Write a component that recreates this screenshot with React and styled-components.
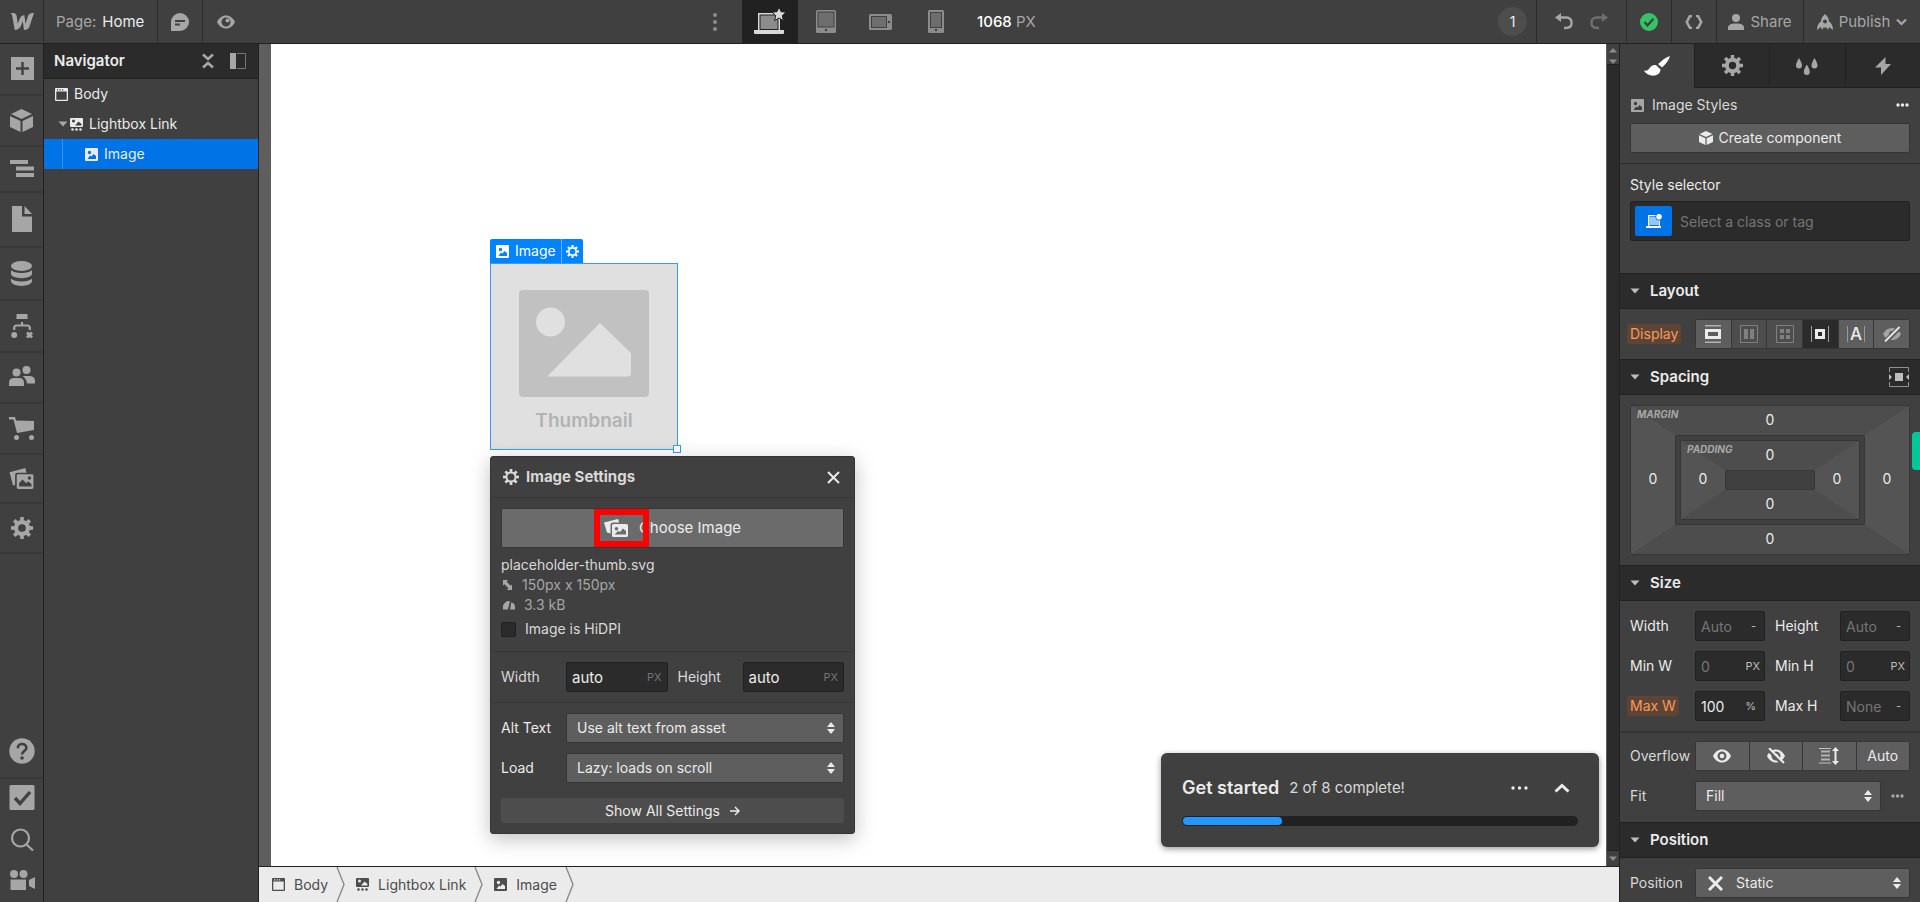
import React, { useState } from "react";
import styled, { createGlobalStyle, css } from "styled-components";

const App = () => {
  return (
    <>
      <GlobalStyle />
      <StApp>
        <TopBar />
        <StMain>
          <SideBar />
          <Navigator />
          <StCenter>
            <Canvas />
            <BottomBar />
          </StCenter>
          <StylePanel />
        </StMain>
        <StFeedbackTab aria-label="Feedback" />
      </StApp>
    </>
  );
};

export default App;

/* ---------- top bar ---------- */

const TopBar = () => {
  return (
    <StTopBar>
      <StTopLeft>
        <StTopButton aria-label="Menu" $width={44} $line>
          <LogoIcon />
        </StTopButton>
        <StPageButton>
          Page: <StPageName>Home</StPageName>
        </StPageButton>
        <StTopButton aria-label="Comments" $width={45} $line>
          <CommentIcon />
        </StTopButton>
        <StTopButton aria-label="Preview" $width={45}>
          <EyeIcon width={18} />
        </StTopButton>
      </StTopLeft>
      <StTopCenter>
        <StTopButton aria-label="More breakpoints" $width={26} $dim>
          <VerticalDotsIcon />
        </StTopButton>
        <StBreakpoints>
          <StTopButton aria-label="Desktop" $width={56} $active>
            <DesktopIcon />
          </StTopButton>
          <StTopButton aria-label="Tablet" $width={55} $dim>
            <TabletIcon />
          </StTopButton>
          <StTopButton aria-label="Mobile landscape" $width={55} $dim>
            <LandscapeIcon />
          </StTopButton>
          <StTopButton aria-label="Mobile portrait" $width={55} $dim>
            <PhoneIcon />
          </StTopButton>
        </StBreakpoints>
        <StCanvasWidth>
          <b>1068</b> PX
        </StCanvasWidth>
      </StTopCenter>
      <StTopRight>
        <StCount>1</StCount>
        <StHistory>
          <StIconButton aria-label="Undo">
            <UndoIcon />
          </StIconButton>
          <StRedo aria-label="Redo">
            <UndoIcon />
          </StRedo>
        </StHistory>
        <StTopButton aria-label="Saved" $width={45} $line>
          <SavedIcon />
        </StTopButton>
        <StTopButton aria-label="Export code" $width={45} $line>
          <CodeIcon />
        </StTopButton>
        <StTopButton $width={87} $line>
          <PersonIcon />
          Share
        </StTopButton>
        <StTopButton $width={116}>
          <RocketIcon />
          Publish
          <ChevronIcon />
        </StTopButton>
      </StTopRight>
    </StTopBar>
  );
};

/* ---------- left tools ---------- */

const SideBar = () => {
  return (
    <StSideBar>
      <StSideButton aria-label="Add element">
        <PlusIcon />
      </StSideButton>
      <StSideButton aria-label="Components">
        <CubeIcon size={23} />
      </StSideButton>
      <StSideButton aria-label="Navigator">
        <LayersIcon />
      </StSideButton>
      <StSideButton aria-label="Pages">
        <PageIcon />
      </StSideButton>
      <StSideButton aria-label="CMS">
        <DatabaseIcon />
      </StSideButton>
      <StSideButton aria-label="Logic">
        <LogicIcon />
      </StSideButton>
      <StSideButton aria-label="Users">
        <UsersIcon />
      </StSideButton>
      <StSideButton aria-label="Ecommerce">
        <CartIcon />
      </StSideButton>
      <StSideButton aria-label="Assets">
        <AssetsIcon />
      </StSideButton>
      <StSideButton aria-label="Settings">
        <GearIcon size={24} height={22} />
      </StSideButton>
      <StSpacer />
      <StSideButton aria-label="Help">
        <HelpIcon />
      </StSideButton>
      <StSmallSideButton aria-label="Audit">
        <AuditIcon />
      </StSmallSideButton>
      <StSmallSideButton aria-label="Search">
        <SearchIcon />
      </StSmallSideButton>
      <StSmallSideButton aria-label="Video tutorials">
        <CameraIcon />
      </StSmallSideButton>
    </StSideBar>
  );
};

/* ---------- navigator ---------- */

const Navigator = () => {
  return (
    <StNavigator>
      <StNavHeader>
        <StNavTitle>Navigator</StNavTitle>
        <StIconButton aria-label="Collapse all">
          <CollapseIcon />
        </StIconButton>
        <StIconButton aria-label="Dock panel">
          <DockIcon />
        </StIconButton>
      </StNavHeader>
      <StNavRow $indent={11}>
        <BodyIcon />
        Body
      </StNavRow>
      <StNavRow $indent={14}>
        <CaretIcon />
        <LightboxIcon />
        Lightbox Link
      </StNavRow>
      <StNavRow $indent={18} $selected>
        <StTreeLine />
        <ImageIcon />
        Image
      </StNavRow>
    </StNavigator>
  );
};

/* ---------- canvas ---------- */

const Canvas = () => {
  return (
    <StCanvas>
      <StGutter />
      <StPage>
        <StSelection>
          <StSelectionLabel>
            <StLabelName>
              <ImageIcon />
              Image
            </StLabelName>
            <StLabelSettings aria-label="Element settings">
              <GearIcon size={13} thin />
            </StLabelSettings>
          </StSelectionLabel>
          <StThumb>
            <PlaceholderDrawing />
            <StThumbText>Thumbnail</StThumbText>
            <StHandle />
          </StThumb>
          <ImageSettings />
        </StSelection>
        <GetStarted />
      </StPage>
      <StScroll>
        <StScrollTop>
          <ArrowUp />
          <ArrowDown />
        </StScrollTop>
        <StScrollBottom>
          <ArrowDown />
        </StScrollBottom>
      </StScroll>
    </StCanvas>
  );
};

const ImageSettings = () => {
  const [hidpi, setHidpi] = useState(false);
  const [width, setWidth] = useState("auto");
  const [height, setHeight] = useState("auto");

  return (
    <StPopover>
      <StPopHeader>
        <GearIcon size={16} thin />
        <StPopTitle>Image Settings</StPopTitle>
        <StIconButton aria-label="Close" $bright>
          <CloseIcon size={13} />
        </StIconButton>
      </StPopHeader>
      <StPopSection>
        <StChooseButton>
          <PicturesIcon />
          Choose Image
          <StMarker />
        </StChooseButton>
        <StFileName>placeholder-thumb.svg</StFileName>
        <StFileMeta>
          <ResizeIcon />
          150px x 150px
        </StFileMeta>
        <StFileMeta>
          <GaugeIcon />
          3.3 kB
        </StFileMeta>
        <StCheckLabel>
          <StCheckbox
            type="checkbox"
            checked={hidpi}
            onChange={() => setHidpi(!hidpi)}
          />
          Image is HiDPI
        </StCheckLabel>
      </StPopSection>
      <StPopSizes>
        <label htmlFor="img-width">Width</label>
        <StField>
          <StInput
            id="img-width"
            value={width}
            onChange={(e) => setWidth(e.target.value)}
            $large
          />
          <StUnit $dim>PX</StUnit>
        </StField>
        <label htmlFor="img-height">Height</label>
        <StField>
          <StInput
            id="img-height"
            value={height}
            onChange={(e) => setHeight(e.target.value)}
            $large
          />
          <StUnit $dim>PX</StUnit>
        </StField>
      </StPopSizes>
      <StPopSelects>
        <label htmlFor="alt-text">Alt Text</label>
        <Select id="alt-text" options={["Use alt text from asset"]} />
        <label htmlFor="load">Load</label>
        <Select id="load" options={["Lazy: loads on scroll"]} />
      </StPopSelects>
      <StShowAll>
        Show All Settings <ArrowRightIcon />
      </StShowAll>
    </StPopover>
  );
};

const GetStarted = () => {
  return (
    <StStarted>
      <StStartedRow>
        <StStartedTitle>Get started</StStartedTitle>
        <StStartedText>2 of 8 complete!</StStartedText>
        <StIconButton aria-label="More" $bright>
          <DotsIcon width={17} />
        </StIconButton>
        <StIconButton aria-label="Expand" $bright>
          <ChevronUpIcon />
        </StIconButton>
      </StStartedRow>
      <StProgress>
        <StProgressBar $done={2} $total={8} />
      </StProgress>
    </StStarted>
  );
};

const Select = ({ id, options, icon }) => {
  return (
    <StSelectBox>
      {icon && <StSelectIcon>{icon}</StSelectIcon>}
      <StSelect id={id} $hasIcon={!!icon}>
        {options.map((option) => (
          <option key={option}>{option}</option>
        ))}
      </StSelect>
      <StSelectArrows>
        <UpDownIcon />
      </StSelectArrows>
    </StSelectBox>
  );
};

const BottomBar = () => {
  return (
    <StBottomBar>
      <StCrumb href="#body">
        <BodyIcon />
        Body
      </StCrumb>
      <CrumbLine />
      <StCrumb href="#lightbox-link">
        <LightboxIcon />
        Lightbox Link
      </StCrumb>
      <CrumbLine />
      <StCrumb href="#image">
        <ImageIcon />
        Image
      </StCrumb>
      <CrumbLine />
    </StBottomBar>
  );
};

/* ---------- style panel ---------- */

const sizeFields = [
  { id: "width", label: "Width", placeholder: "Auto", unit: "-" },
  { id: "height", label: "Height", placeholder: "Auto", unit: "-" },
  { id: "min-w", label: "Min W", placeholder: "0", unit: "PX" },
  { id: "min-h", label: "Min H", placeholder: "0", unit: "PX" },
  { id: "max-w", label: "Max W", value: "100", unit: "%" },
  { id: "max-h", label: "Max H", placeholder: "None", unit: "-" },
];

const StylePanel = () => {
  return (
    <StPanel>
      <StTabs>
        <StTab aria-label="Style" $active>
          <BrushIcon />
        </StTab>
        <StTab aria-label="Settings">
          <GearIcon size={21} />
        </StTab>
        <StTab aria-label="Style manager">
          <DropsIcon />
        </StTab>
        <StTab aria-label="Interactions">
          <BoltIcon />
        </StTab>
      </StTabs>
      <StStylesTop>
        <StStylesRow>
          <ImageIcon />
          <StStylesName>Image Styles</StStylesName>
          <StIconButton aria-label="More" $bright>
            <DotsIcon width={13} />
          </StIconButton>
        </StStylesRow>
        <StCreateButton>
          <CubeIcon size={14} />
          Create component
        </StCreateButton>
      </StStylesTop>
      <StSelectorSection>
        <label htmlFor="selector">Style selector</label>
        <StSelectorField>
          <StSelectorChip aria-label="Inheritance">
            <SelectorIcon />
          </StSelectorChip>
          <StInput id="selector" placeholder="Select a class or tag" $plain />
        </StSelectorField>
      </StSelectorSection>

      <Section title="Layout">
        <StRow>
          <StTag>Display</StTag>
          <StGroup>
            <StGroupButton aria-label="Block">
              <BlockIcon />
            </StGroupButton>
            <StGroupButton aria-label="Flex" $muted>
              <FlexIcon />
            </StGroupButton>
            <StGroupButton aria-label="Grid" $muted>
              <GridIcon />
            </StGroupButton>
            <StGroupButton aria-label="Inline block" $active>
              <InlineBlockIcon />
            </StGroupButton>
            <StGroupButton aria-label="Inline">
              <StInlineMark>A</StInlineMark>
            </StGroupButton>
            <StGroupButton aria-label="None">
              <NoneIcon />
            </StGroupButton>
          </StGroup>
        </StRow>
      </Section>

      <Section title="Spacing" action={<AutoMarginIcon />}>
        <SpacingBox name="MARGIN">
          <StBoxWell>
            <SpacingBox name="PADDING">
              <StBoxCore />
            </SpacingBox>
          </StBoxWell>
        </SpacingBox>
      </Section>

      <Section title="Size">
        <StSizeGrid>
          {sizeFields.map((field) => (
            <SizeField key={field.id} {...field} />
          ))}
        </StSizeGrid>
      </Section>
      <StSectionBody $divided>
        <StRow>
          <span>Overflow</span>
          <StGroup>
            <StGroupButton aria-label="Visible">
              <EyeIcon width={18} dot />
            </StGroupButton>
            <StGroupButton aria-label="Hidden">
              <EyeOffIcon />
            </StGroupButton>
            <StGroupButton aria-label="Scroll">
              <ScrollIcon />
            </StGroupButton>
            <StGroupButton>Auto</StGroupButton>
          </StGroup>
        </StRow>
        <StRow>
          <label htmlFor="fit">Fit</label>
          <StInlineFields>
            <Select id="fit" options={["Fill", "Contain", "Cover", "None"]} />
            <StIconButton aria-label="Fit options">
              <DotsIcon width={13} />
            </StIconButton>
          </StInlineFields>
        </StRow>
      </StSectionBody>

      <Section title="Position">
        <StRow>
          <label htmlFor="position">Position</label>
          <Select
            id="position"
            icon={<CloseIcon size={15} bold />}
            options={["Static", "Relative", "Absolute", "Fixed", "Sticky"]}
          />
        </StRow>
      </Section>
    </StPanel>
  );
};

const Section = ({ title, action, children }) => {
  return (
    <>
      <StSectionHeader>
        <CaretIcon />
        <StSectionTitle>{title}</StSectionTitle>
        {action}
      </StSectionHeader>
      <StSectionBody>{children}</StSectionBody>
    </>
  );
};

const SizeField = ({ id, label, value, placeholder, unit }) => {
  return (
    <>
      {value ? (
        <StTag as="label" htmlFor={id}>
          {label}
        </StTag>
      ) : (
        <label htmlFor={id}>{label}</label>
      )}
      <StField>
        <StInput id={id} defaultValue={value} placeholder={placeholder} />
        <StUnit $right={unit === "PX" ? 5 : 9}>{unit}</StUnit>
      </StField>
    </>
  );
};

const SpacingBox = ({ name, children }) => {
  return (
    <StBox>
      <StBoxName>{name}</StBoxName>
      <StBoxValue $area="top">0</StBoxValue>
      <StBoxValue $area="left">0</StBoxValue>
      <StBoxInner>{children}</StBoxInner>
      <StBoxValue $area="right">0</StBoxValue>
      <StBoxValue $area="bottom">0</StBoxValue>
    </StBox>
  );
};

/* ---------- icons ---------- */

const Svg = ({ w, h, children, ...rest }) => (
  <svg
    width={w}
    height={h}
    viewBox={`0 0 ${w} ${h}`}
    fill="currentColor"
    aria-hidden="true"
    {...rest}
  >
    {children}
  </svg>
);

const LogoIcon = () => (
  <Svg w={24} h={17}>
    <path d="M24 0s-4.2 12.400-4.500 13.500C19.100 15.600 16.600 17 14 17c0 0-1.100-7.900-1.200-8.700C12.500 9.200 10.900 13 10.900 13 9.700 15.800 7.200 17 4.700 17L2.300 3.300C2 1.200 1 .2 0 0h3.400C5 0 6.400 1 6.700 3l1 7.900c.1-.6 2.600-6.300 2.600-6.300.6-1.400 1.800-2.400 4.100-2.400l1.100 8.700 2.400-7.700C18.600 1 20.600 0 22.500 0z" />
  </Svg>
);

const CommentIcon = () => (
  <Svg w={18} h={18}>
    <path
      fillRule="evenodd"
      d="M9 0a9 9 0 1 1 0 18H0V9a9 9 0 0 1 9-9zM4 7v2h10V7zm0 3.500v2h5v-2z"
    />
  </Svg>
);

const EyeIcon = ({ width, dot }) => (
  <svg
    width={width}
    height={14}
    viewBox="0 0 18 14"
    fill="currentColor"
    aria-hidden="true"
  >
    <path
      fillRule="evenodd"
      d="M9 .5c4 0 7 2.500 9 6.500-2 4-5 6.500-9 6.500S2 11 0 7C2 3 5 .5 9 .5zm0 2a4.500 4.500 0 1 0 0 9 4.500 4.500 0 0 0 0-9z"
    />
    {dot ? (
      <circle cx="9" cy="7" r="2.300" />
    ) : (
      <circle cx="10.500" cy="5.500" r="2" />
    )}
  </svg>
);

const EyeOffIcon = () => (
  <Svg w={18} h={16}>
    <path
      fillRule="evenodd"
      d="M9 1.500c4 0 7 2.500 9 6.500-2 4-5 6.500-9 6.500S2 12 0 8c2-4 5-6.500 9-6.500zm0 2a4.500 4.500 0 1 0 0 9 4.500 4.500 0 0 0 0-9z"
    />
    <circle cx="9" cy="8" r="2.300" />
    <path d="M1 2 15 16" stroke="#5e5e5e" strokeWidth="2.500" />
    <path d="M2 0l15 15" stroke="currentColor" strokeWidth="2" />
  </Svg>
);

const VerticalDotsIcon = () => (
  <Svg w={4} h={20}>
    <circle cx="2" cy="3" r="2" />
    <circle cx="2" cy="10" r="2" />
    <circle cx="2" cy="17" r="2" />
  </Svg>
);

const DotsIcon = ({ width }) => (
  <svg
    width={width}
    height="4"
    viewBox={`0 0 ${width} 4`}
    fill="currentColor"
    aria-hidden="true"
  >
    <circle cx="2" cy="2" r="1.700" />
    <circle cx={width / 2} cy="2" r="1.700" />
    <circle cx={width - 2} cy="2" r="1.700" />
  </svg>
);

const DesktopIcon = () => (
  <Svg w={32} h={30}>
    <path d="M4 6h22v17H4z" fill="#d9d9d9" />
    <path d="M5.500 7.500h19V23h-19z" fill="#212121" />
    <path d="M6.500 8.500h17V22h-17z" fill="#8c8c8c" />
    <path d="M0 23h30v3q0 1-1 1H1q-1 0-1-1z" fill="#d9d9d9" />
    <path
      d="M25 0l2.100 4.700 5 .5-3.800 3.400 1.100 5L25 11l-4.400 2.600 1.100-5L18 5.200l5-.5z"
      fill="#d9d9d9"
      stroke="#212121"
      strokeWidth="1"
    />
  </Svg>
);

const TabletIcon = () => (
  <Svg w={20} h={23}>
    <rect width="20" height="23" rx="1.500" />
    <path d="M1.500 1.500h17v16h-17z" fill="#404040" />
    <path d="M2.500 2.500h15v14h-15z" fill="#6e6e6e" />
    <circle cx="10" cy="20" r="1.200" fill="#404040" />
  </Svg>
);

const LandscapeIcon = () => (
  <Svg w={23} h={16}>
    <rect width="23" height="16" rx="1.500" />
    <path d="M2 2h16v12H2z" fill="#404040" />
    <path d="M3 3h14v10H3z" fill="#6e6e6e" />
    <circle cx="20" cy="8" r="1.200" fill="#404040" />
  </Svg>
);

const PhoneIcon = () => (
  <Svg w={16} h={23}>
    <rect width="16" height="23" rx="1.500" />
    <path d="M2 2h12v16H2z" fill="#404040" />
    <path d="M3 3h10v14H3z" fill="#6e6e6e" />
    <circle cx="8" cy="20" r="1.200" fill="#404040" />
  </Svg>
);

const UndoIcon = () => (
  <Svg w={18} h={17}>
    <path d="M6 0v9L0 4.500z" />
    <path
      d="M4 4.500h7a5 5 0 0 1 5.500 5.500c0 3-2 5-5.500 5H9"
      fill="none"
      stroke="currentColor"
      strokeWidth="2.400"
    />
  </Svg>
);

const SavedIcon = () => (
  <Svg w={18} h={18}>
    <circle cx="9" cy="9" r="9" fill="#33c466" />
    <path
      d="M4.500 9l3 3.300 6-6.600"
      fill="none"
      stroke="#404040"
      strokeWidth="2.200"
    />
  </Svg>
);

const CodeIcon = () => (
  <Svg w={18} h={14} fill="none" stroke="currentColor" strokeWidth="2.600">
    <path d="M7 1 5 1 1.800 7 5 13h2M11 1h2l3.200 6L13 13h-2" />
  </Svg>
);

const PersonIcon = () => (
  <Svg w={16} h={16}>
    <circle cx="8" cy="4" r="4" />
    <path d="M0 16v-2.500C0 11 3 9.500 8 9.500s8 1.500 8 4V16z" />
  </Svg>
);

const RocketIcon = () => (
  <Svg w={16} h={16}>
    <path
      fillRule="evenodd"
      d="M8 0c3 2.500 4 5 4 7.500 2.500 1.500 4 4 4 8.500l-4-3-1 3-1.500-2.500h-3L5 16l-1-3-4 3c0-4.500 1.500-7 4-8.500C4 5 5 2.500 8 0zm0 5.500a2 2 0 1 0 0 4 2 2 0 0 0 0-4z"
    />
  </Svg>
);

const ChevronIcon = () => (
  <Svg w={11} h={8} fill="none" stroke="currentColor" strokeWidth="2.200">
    <path d="M1 1.500l4.500 4.500L10 1.500" />
  </Svg>
);

const ChevronUpIcon = () => (
  <Svg w={16} h={10} fill="none" stroke="currentColor" strokeWidth="3">
    <path d="M1.500 8.500 8 2.500l6.500 6" />
  </Svg>
);

const PlusIcon = () => (
  <Svg w={24} h={24}>
    <path
      fillRule="evenodd"
      d="M1 0h23v23H1zM11.300 5v5.300H6v2.400h5.300V18h2.400v-5.300H19v-2.400h-5.300V5z"
    />
  </Svg>
);

const CubeIcon = ({ size }) => (
  <svg
    width={size}
    height={size}
    viewBox="0 0 23 23"
    fill="currentColor"
    aria-hidden="true"
  >
    <path d="M11.500 0 22 5l-10.500 5L1 5zM0 7l10.500 5v11L0 18zM23 7l-10.500 5v11L23 18z" />
  </svg>
);

const LayersIcon = () => (
  <Svg w={24} h={18}>
    <path d="M0 0h18v4H0zM6 6.500h18v4H6zM6 13h18v4H6z" />
  </Svg>
);

const PageIcon = () => (
  <Svg w={20} h={27}>
    <path d="M0 0h10v10.500h10V26H0zM12.500 0 20 8h-7.500z" />
  </Svg>
);

const DatabaseIcon = () => (
  <Svg w={21} h={25}>
    <ellipse cx="10.500" cy="5" rx="10.500" ry="5" />
    <path d="M0 9c3 4 18 4 21 0v4c-1 5.500-20 5.500-21 0zM0 17.500c3 4 18 4 21 0V20c-1 6.500-20 6.500-21 0z" />
  </Svg>
);

const LogicIcon = () => (
  <Svg w={22} h={24}>
    <path d="M5.500 0h11v5h-11z" />
    <path
      d="M11 8v3M3.200 16v-2q0-2.500 2.500-2.500h10.600q2.500 0 2.500 2.500v2"
      fill="none"
      stroke="currentColor"
      strokeWidth="2.200"
    />
    <circle cx="3.200" cy="21" r="3" />
    <path
      d="M16 18.500l5 5M21 18.500l-5 5"
      stroke="currentColor"
      strokeWidth="3"
    />
  </Svg>
);

const UsersIcon = () => (
  <Svg w={26} h={23}>
    <circle cx="7.500" cy="6.500" r="4" />
    <circle cx="17.500" cy="4" r="4" />
    <path d="M0 20v-3q0-5 5-5h5q5 0 5 5v3zM13.500 10h6.500q6 0 6 5v2.500h-8q-.5-5-4.500-7.500z" />
  </Svg>
);

const CartIcon = () => (
  <Svg w={26} h={23}>
    <path d="M0 0h6l1 3.500 18 .5v9L8 16 4.500 2.500H0z" />
    <circle cx="7.500" cy="20.500" r="2.500" />
    <circle cx="22.500" cy="20.500" r="2.500" />
  </Svg>
);

const AssetsIcon = () => (
  <svg
    width="25"
    height="21"
    viewBox="0 0 25 22"
    fill="currentColor"
    aria-hidden="true"
  >
    <path d="M0 4.500 16.500 0l1.200 5H8q-2.200 0-2.200 2.200V18L3.500 18z" />
    <path
      fillRule="evenodd"
      d="M9 6.500h14.500q1.500 0 1.500 1.500v12.500q0 1.500-1.500 1.500H9q-1.500 0-1.500-1.500V8q0-1.500 1.500-1.500zM10 19.500h13v-2.500l-3.500-3-2 2-4-4L10 16zM20.800 8.700a1.800 1.800 0 1 0 0 3.600 1.800 1.800 0 0 0 0-3.600z"
    />
  </svg>
);

const PicturesIcon = () => (
  <Svg w={24} h={18}>
    <path d="M0 3.500 14 0l1.200 3.500H9Q6.500 3.500 6.500 6v8.500L3 13.500z" />
    <path
      fillRule="evenodd"
      d="M9.500 5h13Q24 5 24 6.500v10q0 1.500-1.500 1.500h-13Q8 18 8 16.500v-10Q8 5 9.500 5zM12.500 8a1.800 1.800 0 1 0 0 3.600 1.800 1.800 0 0 0 0-3.600zM19 9.500 16 13l-2-1-3.500 3.500H22V12z"
    />
  </Svg>
);

const GearIcon = ({ size, height, thin }) => (
  <svg
    width={size}
    height={height || size}
    viewBox="-12 -12 24 24"
    overflow="visible"
    aria-hidden="true"
  >
    <circle
      r={thin ? 6.8 : 6.5}
      fill="none"
      stroke="currentColor"
      strokeWidth={thin ? 3 : 4.6}
    />
    {[0, 45, 90, 135, 180, 225, 270, 315].map((deg) => (
      <rect
        key={deg}
        x="-2"
        y="-12"
        width="4"
        height="4.500"
        fill="currentColor"
        transform={`rotate(${deg})`}
      />
    ))}
  </svg>
);

const HelpIcon = () => (
  <Svg w={26} h={26}>
    <circle cx="13" cy="13" r="12.700" />
    <path
      d="M8.800 10.200c0-5.600 8.600-5.400 8.600-.4 0 3.200-4.300 3.200-4.300 6.600"
      fill="none"
      stroke="#404040"
      strokeWidth="2.600"
    />
    <circle cx="13" cy="20" r="1.800" fill="#404040" />
  </Svg>
);

const AuditIcon = () => (
  <Svg w={26} h={25}>
    <rect x=".5" width="25" height="25" rx="1.500" />
    <path
      d="M6 13l5 5.500L21 7"
      fill="none"
      stroke="#404040"
      strokeWidth="3.400"
    />
  </Svg>
);

const SearchIcon = () => (
  <Svg w={24} h={24} fill="none" stroke="currentColor" strokeWidth="2.200">
    <circle cx="10.500" cy="10" r="8.500" />
    <path d="M16.500 16.500 23 22.500" />
  </Svg>
);

const CameraIcon = () => (
  <Svg w={26} h={20}>
    <circle cx="5" cy="4" r="4" />
    <circle cx="14.500" cy="4" r="4" />
    <path d="M1.500 9.500H17V20H1.500zM26 7v12l-6-3v-6z" />
  </Svg>
);

const CollapseIcon = () => (
  <Svg w={12} h={16} fill="none" stroke="currentColor" strokeWidth="2.600">
    <path d="M1 1.500l5 4.500 5-4.500M1 14.500 6 10l5 4.500" />
  </Svg>
);

const DockIcon = () => (
  <Svg w={16} h={16}>
    <path d="M0 0h6v16H0z" />
    <path
      d="M7 .5h8.500v15H7"
      fill="none"
      stroke="currentColor"
      strokeOpacity=".6"
    />
  </Svg>
);

const BodyIcon = () => (
  <Svg w={13} h={13}>
    <path
      fillRule="evenodd"
      d="M1 0h11q1 0 1 1v11q0 1-1 1H1q-1 0-1-1V1q0-1 1-1zm.3 3.500v8.200h10.400V3.500zM2 1.200v1.300h1.200V1.200zm2.500 0v1.300h1.200V1.200zm2.500 0v1.300h1.200V1.200z"
    />
  </Svg>
);

const LightboxIcon = () => (
  <Svg w={13} h={13}>
    <path
      fillRule="evenodd"
      d="M1 0h11q1 0 1 1v7q0 1-1 1H1q-1 0-1-1V1q0-1 1-1zM3.500 1.500a1.500 1.500 0 1 0 0 3 1.500 1.500 0 0 0 0-3zM8.500 3.500 5 7.500h6.500V6z"
    />
    <circle cx="2.500" cy="11.500" r="1.300" />
    <circle cx="6.500" cy="11.500" r="1.300" />
    <circle cx="10.500" cy="11.500" r="1.300" />
  </Svg>
);

const ImageIcon = () => (
  <Svg w={13} h={13}>
    <path
      fillRule="evenodd"
      d="M1 0h11q1 0 1 1v11q0 1-1 1H1q-1 0-1-1V1q0-1 1-1zM4.500 2.800a1.700 1.700 0 1 0 0 3.400 1.700 1.700 0 0 0 0-3.400zM8.500 6 6.500 8.500 5 7.500 2.500 11h8.500V8z"
    />
  </Svg>
);

const CaretIcon = () => (
  <Svg w={10} h={6}>
    <path d="M.5.500h9L5 5.500z" />
  </Svg>
);

const ArrowUp = () => (
  <Svg w={8} h={5}>
    <path d="M4 0l4 4.500H0z" />
  </Svg>
);

const ArrowDown = () => (
  <Svg w={8} h={5}>
    <path d="M0 .5h8L4 5z" />
  </Svg>
);

const PlaceholderDrawing = () => (
  <svg viewBox="0 0 130 107" width="130" height="107" aria-hidden="true">
    <rect width="130" height="107" rx="4" fill="#c1c1c1" />
    <circle cx="31.500" cy="32" r="14.500" fill="#e0e0e0" />
    <path
      d="M28 86.500 81 33l31 30v20q0 3.500-3.500 3.500z"
      fill="#e0e0e0"
    />
  </svg>
);

const CloseIcon = ({ size, bold }) => (
  <Svg
    w={size}
    h={size}
    fill="none"
    stroke="currentColor"
    strokeWidth={bold ? 3 : 2}
  >
    <path d={`M1 1l${size - 2} ${size - 2}M${size - 1} 1L1 ${size - 1}`} />
  </Svg>
);

const ResizeIcon = () => (
  <Svg w={10} h={10}>
    <path d="M0 0h5L3.700 1.700l4 4L9 4.500V10H3.800l1.700-1.800-4-4L0 5.500z" />
  </Svg>
);

const GaugeIcon = () => (
  <Svg w={12} h={10}>
    <path d="M0 9.500V7a6 6 0 0 1 7-5.800L4.800 9.500zM8.300 2.200Q12 3.500 12 7v2.500H7z" />
  </Svg>
);

const UpDownIcon = () => (
  <Svg w={8} h={12}>
    <path d="M4 0l4 5H0zM0 7h8l-4 5z" />
  </Svg>
);

const ArrowRightIcon = () => (
  <Svg w={10} h={10} fill="none" stroke="currentColor" strokeWidth="1.500">
    <path d="M0 5h9M5 1l4 4-4 4" />
  </Svg>
);

const CrumbLine = () => (
  <Svg w={9} h={35} fill="none" stroke="#8c8c8c" strokeWidth="1.400">
    <path d="M1 0l7 17.500L1 35" />
  </Svg>
);

const BrushIcon = () => (
  <Svg w={26} h={20}>
    <path d="M26 0c-1 4-4 8-8 11.500l-4-3.500C18 4.500 22 1 26 0zM12.500 9.500l4 4c0 5-6 7.500-11 5.500C3 18 1 16.500 0 14.500c3.500.5 4.500-.5 6-3 1.500-2 4-3 6.500-2z" />
  </Svg>
);

const DropsIcon = () => (
  <Svg w={22} h={18}>
    <path d="M3 1q3 5 3 7.500a3 3 0 0 1-6 0Q0 6 3 1zM18.500 1q3 5 3 7.500a3 3 0 0 1-6 0q0-2.500 3-7.500zM10.800 7.500q3 5 3 7.500a3 3 0 0 1-6 0q0-2.500 3-7.500z" />
  </Svg>
);

const BoltIcon = () => (
  <Svg w={16} h={18}>
    <path d="M10.500 0v7H16L6 18v-7.500H0z" />
  </Svg>
);

const SelectorIcon = () => (
  <Svg w={16} h={14}>
    <path
      d="M2.700 12V1.700h10.600V12"
      fill="none"
      stroke="currentColor"
      strokeWidth="1.300"
    />
    <path d="M3.500 3h9v8h-9z" fillOpacity=".6" />
    <path d="M0 12h15v2H0z" />
    <circle cx="13" cy="2.800" r="3.600" fill="#0073e6" />
    <circle cx="13" cy="2.800" r="2.800" />
  </Svg>
);

const BlockIcon = () => (
  <Svg w={16} h={18}>
    <path d="M0 0h16v1.500H0zM0 16.500h16V18H0z" fillOpacity=".6" />
    <path fillRule="evenodd" d="M0 4h16v10H0zm3 3v4h10V7z" />
  </Svg>
);

const FlexIcon = () => (
  <Svg w={18} h={18}>
    <path d="M.5.500h17v17H.5z" fill="none" stroke="currentColor" />
    <path d="M4 4h4v10H4zM10 4h4v10h-4z" />
  </Svg>
);

const GridIcon = () => (
  <Svg w={18} h={18}>
    <path d="M.5.500h17v17H.5z" fill="none" stroke="currentColor" />
    <path d="M4 4h4v4H4zM10 4h4v4h-4zM4 10h4v4H4zM10 10h4v4h-4z" />
  </Svg>
);

const InlineBlockIcon = () => (
  <Svg w={18} h={16}>
    <path d="M0 0h1v16H0zM17 0h1v16h-1z" fillOpacity=".6" />
    <path fillRule="evenodd" d="M4 3h10v10H4zm3 3v4h4V6z" />
  </Svg>
);

const NoneIcon = () => (
  <Svg w={18} h={16}>
    <path
      fillRule="evenodd"
      fillOpacity=".5"
      d="M9 2c4 0 7 2 9 6-2 4-5 6-9 6s-7-2-9-6c2-4 5-6 9-6zm0 3a3 3 0 1 0 0 6 3 3 0 0 0 0-6z"
    />
    <path d="M2 16 17 1" stroke="#5e5e5e" strokeWidth="5" />
    <path d="M2 15.500 16.500 1" stroke="currentColor" strokeWidth="1.800" />
  </Svg>
);

const AutoMarginIcon = () => (
  <Svg w={20} h={20}>
    <path
      d="M.5 5V.5h19V5M.5 15v4.500h19V15"
      fill="none"
      stroke="currentColor"
      strokeOpacity=".7"
    />
    <path d="M6 6h8v8H6zM0 7l3 3-3 3zM20 7l-3 3 3 3z" />
  </Svg>
);

const ScrollIcon = () => (
  <Svg w={20} h={18}>
    <path d="M0 1h12v1H0zM0 15.500h12v1H0z" fillOpacity=".7" />
    <path d="M2 3.500h9v2H2zM2 7.500h9v2H2zM2 11.500h9v2H2z" fillOpacity=".6" />
    <path d="M16.500 0l3.500 4h-2.500v10H20l-3.500 4-3.500-4h2.500V4H13z" />
  </Svg>
);

/* ---------- styles ---------- */

const GlobalStyle = createGlobalStyle`
  * {
    box-sizing: border-box;
  }
  body {
    margin: 0;
    font-family: Inter, "Liberation Sans", sans-serif;
    font-size: 14px;
    line-height: 20px;
    color: #d9d9d9;
    background-color: #404040;
  }
  button, input, select {
    margin: 0;
    padding: 0;
    border: 0;
    font: inherit;
    color: inherit;
    background: none;
  }
  button {
    cursor: pointer;
  }
  svg {
    display: block;
    flex-shrink: 0;
  }
`;

const StApp = styled.div`
  position: relative;
  display: flex;
  flex-direction: column;
  height: 100vh;
  overflow: hidden;
`;

const StMain = styled.div`
  flex: 1;
  display: flex;
  min-height: 0;
`;

const StTopBar = styled.header`
  display: flex;
  height: 44px;
  border-bottom: 1px solid #212121;
  color: #a6a6a6;
`;

const StTopLeft = styled.div`
  flex: 1;
  display: flex;
`;

const StTopCenter = styled.div`
  display: flex;
  align-items: center;
  gap: 14px;
  width: 516px;
`;

const StBreakpoints = styled.div`
  display: flex;
`;

const StTopRight = styled.div`
  flex: 1;
  display: flex;
  align-items: center;
  justify-content: flex-end;
`;

const StTopButton = styled.button`
  display: flex;
  align-items: center;
  justify-content: center;
  gap: 6px;
  width: ${(props) => props.$width}px;
  height: 43px;
  font-size: 15px;
  color: ${(props) => (props.$dim ? "#8c8c8c" : "#a6a6a6")};
  background-color: ${(props) => (props.$active ? "#212121" : "transparent")};
  border-right: ${(props) => (props.$line ? "1px solid #2b2b2b" : "0")};
`;

const StPageButton = styled.button`
  display: flex;
  gap: 6px;
  align-items: center;
  height: 43px;
  padding: 0 13px 0 12px;
  color: #a6a6a6;
  font-size: 15px;
  border-right: 1px solid #2b2b2b;
`;

const StPageName = styled.span`
  color: #ebebeb;
`;

const StHistory = styled.div`
  display: flex;
  align-items: center;
  gap: 17px;
  height: 43px;
  padding: 0 18px;
  border: 1px solid #2b2b2b;
  border-width: 0 1px;
`;

const StCanvasWidth = styled.div`
  font-size: 15px;
  color: #a6a6a6;

  b {
    font-weight: 500;
    color: #fff;
  }
`;

const StCount = styled.button`
  width: 29px;
  height: 29px;
  margin-right: 9px;
  border-radius: 50%;
  color: #ebebeb;
  background-color: #4d4d4d;
`;

const StSideBar = styled.nav`
  display: flex;
  flex-direction: column;
  width: 44px;
  border-right: 1px solid #212121;
  color: #a6a6a6;
`;

const StSideButton = styled.button`
  display: flex;
  justify-content: center;
  padding: 13px 0;
  border-bottom: 2px solid #383838;
`;

const StSmallSideButton = styled.button`
  display: flex;
  justify-content: center;
  padding: 6px 0 12px;
`;

const StSpacer = styled.div`
  flex: 1;
`;

const StNavigator = styled.aside`
  width: 215px;
  border-right: 1px solid #212121;
`;

const StNavHeader = styled.div`
  display: flex;
  align-items: center;
  gap: 16px;
  height: 35px;
  padding: 0 12px 0 10px;
  border-bottom: 1px solid #212121;
  background-color: #2b2b2b;
`;

const StNavTitle = styled.h2`
  flex: 1;
  margin: 0;
  font-size: 15px;
  font-weight: 600;
  color: #ebebeb;
`;

const StIconButton = styled.button`
  display: flex;
  color: ${(props) => (props.$bright ? "#ebebeb" : "#a6a6a6")};
`;

const StRedo = styled(StIconButton)`
  opacity: 0.45;
  transform: scaleX(-1);
`;

const StNavRow = styled.div`
  display: flex;
  align-items: center;
  gap: 6px;
  height: 30px;
  padding-left: ${(props) => props.$indent}px;
  color: #ebebeb;
  background-color: ${(props) => (props.$selected ? "#0073e6" : "transparent")};

  svg[width="10"] {
    margin-right: -4px;
    color: #a6a6a6;
  }
`;

const StTreeLine = styled.span`
  width: 1px;
  height: 30px;
  margin-right: 16px;
  background-color: #3391ff;
`;

const StCenter = styled.main`
  flex: 1;
  display: flex;
  flex-direction: column;
  min-width: 0;
`;

const StCanvas = styled.div`
  flex: 1;
  display: flex;
  min-height: 0;
`;

const StGutter = styled.div`
  width: 12px;
  background-color: #5e5e5e;
`;

const StPage = styled.div`
  position: relative;
  flex: 1;
  background-color: #fff;
`;

const StSelection = styled.div`
  position: absolute;
  top: 195px;
  left: 219px;
  width: 365px;
`;

const StSelectionLabel = styled.div`
  display: flex;
  width: max-content;
  height: 24px;
  color: #fff;
  background-color: #0084ff;
  border-radius: 2px 2px 0 0;
`;

const StLabelName = styled.div`
  display: flex;
  align-items: center;
  gap: 6px;
  padding: 0 5px 0 6px;
`;

const StLabelSettings = styled.button`
  display: flex;
  align-items: center;
  justify-content: center;
  width: 22px;
  border-left: 1px solid #66b5ff;
`;

const StThumb = styled.div`
  position: relative;
  display: flex;
  flex-direction: column;
  align-items: center;
  width: 188px;
  height: 187px;
  padding-top: 26px;
  border: 1px solid #3899f7;
  background-color: #e0e0e0;
`;

const StThumbText = styled.span`
  margin-top: 14px;
  font-size: 19px;
  font-weight: 600;
  color: #b3b3b3;
`;

const StHandle = styled.span`
  position: absolute;
  right: -4px;
  bottom: -4px;
  width: 8px;
  height: 8px;
  border: 1px solid #3899f7;
  background-color: #fff;
`;

const StPopover = styled.section`
  position: relative;
  margin-top: 6px;
  padding-bottom: 10px;
  border: 1px solid #363636;
  border-radius: 3px;
  background-color: #404040;
  box-shadow: 0 5px 20px rgba(0, 0, 0, 0.25);
`;

const StPopHeader = styled.div`
  display: flex;
  align-items: center;
  gap: 7px;
  height: 41px;
  padding: 0 14px 0 12px;
  border-bottom: 1px solid #363636;
`;

const StPopTitle = styled.h3`
  flex: 1;
  margin: 0;
  font-size: 15px;
  font-weight: 700;
`;

const StPopSection = styled.div`
  display: flex;
  flex-direction: column;
  padding: 10px 10px 12px;
  border-bottom: 1px solid #363636;
`;

const raised = css`
  border: 1px solid #363636;
  border-radius: 2px;
  background-color: #5e5e5e;
  color: #ebebeb;
`;

const StChooseButton = styled.button`
  ${raised}
  position: relative;
  display: flex;
  align-items: center;
  justify-content: center;
  gap: 11px;
  height: 40px;
  font-size: 15px;
  background-color: #6b6b6b;
`;

const StMarker = styled.span`
  position: absolute;
  top: 0;
  left: 92px;
  width: 55px;
  height: 38px;
  border: 6px solid #f00;
`;

const StFileName = styled.span`
  margin-top: 7px;
`;

const StFileMeta = styled.span`
  display: flex;
  align-items: center;
  gap: 9px;
  height: 20px;
  padding-left: 2px;
  color: #a6a6a6;
`;

const StCheckLabel = styled.label`
  display: flex;
  align-items: center;
  gap: 9px;
  margin-top: 4px;
`;

const StCheckbox = styled.input`
  appearance: none;
  width: 15px;
  height: 15px;
  border: 1px solid #212121;
  border-radius: 2px;
  background-color: #2b2b2b;

  &:checked {
    background-color: #0073e6;
  }
`;

const StPopSizes = styled.div`
  display: grid;
  grid-template-columns: 55px 1fr 55px 1fr;
  column-gap: 10px;
  align-items: center;
  padding: 10px;
  border-bottom: 1px solid #363636;
`;

const StPopSelects = styled.div`
  display: grid;
  grid-template-columns: 65px 1fr;
  row-gap: 10px;
  align-items: center;
  padding: 10px 10px 15px;
  color: #ebebeb;
`;

const StShowAll = styled.button`
  display: flex;
  align-items: center;
  justify-content: center;
  gap: 10px;
  width: calc(100% - 20px);
  height: 25px;
  margin: 0 10px;
  border-radius: 2px;
  color: #ebebeb;
  background-color: #4d4d4d;
`;

const StField = styled.div`
  position: relative;
  display: flex;
`;

const StInput = styled.input`
  flex: 1;
  width: 100%;
  min-width: 0;
  height: 30px;
  padding: 0 5px;
  border: ${(props) => (props.$plain ? "0" : "1px solid #212121")};
  border-radius: 2px;
  font-size: ${(props) => (props.$large ? 15 : 14)}px;
  color: #ebebeb;
  background-color: #2b2b2b;

  &::placeholder {
    color: #757575;
    opacity: 1;
  }
`;

const StUnit = styled.span`
  position: absolute;
  top: 5px;
  right: ${(props) => props.$right || 6}px;
  font-size: 11px;
  color: ${(props) => (props.$dim ? "#757575" : "#bdbdbd")};
`;

const StSelectBox = styled.div`
  position: relative;
  flex: 1;
  display: flex;
`;

const StSelect = styled.select`
  ${raised}
  appearance: none;
  flex: 1;
  min-width: 0;
  height: 30px;
  padding: 0 24px 0 ${(props) => (props.$hasIcon ? 40 : 10)}px;
`;

const StSelectIcon = styled.span`
  position: absolute;
  top: 8px;
  left: 13px;
  pointer-events: none;
  color: #ebebeb;
`;

const StSelectArrows = styled.span`
  position: absolute;
  top: 9px;
  right: 9px;
  pointer-events: none;
  color: #ebebeb;
`;

const StStarted = styled.section`
  position: absolute;
  right: 7px;
  bottom: 19px;
  width: 438px;
  padding: 25px 21px 21px;
  border-radius: 6px;
  background-color: #404040;
  box-shadow: 0 2px 6px rgba(0, 0, 0, 0.4);
`;

const StStartedRow = styled.div`
  display: flex;
  align-items: center;
  gap: 26px;
  padding-right: 8px;
`;

const StStartedTitle = styled.h3`
  margin: 0 -16px 0 0;
  font-size: 18px;
  font-weight: 600;
  color: #ebebeb;
`;

const StStartedText = styled.span`
  flex: 1;
  font-size: 15px;
`;

const StProgress = styled.div`
  height: 10px;
  margin-top: 18px;
  padding: 1px;
  border-radius: 5px;
  background-color: #212121;
`;

const StProgressBar = styled.div`
  width: ${(props) => (props.$done / props.$total) * 100}%;
  height: 8px;
  border-radius: 4px;
  background-color: #2496ff;
`;

const StScroll = styled.div`
  display: flex;
  flex-direction: column;
  justify-content: space-between;
  width: 13px;
  border-left: 1px solid #5e5e5e;
  background-color: #2b2b2b;
  color: #8c8c8c;
`;

const StScrollTop = styled.div`
  display: flex;
  flex-direction: column;
  align-items: center;
  justify-content: space-between;
  height: 21px;
  padding-top: 4px;
  border-bottom: 1px solid #212121;
  background-color: #404040;
`;

const StScrollBottom = styled.div`
  display: flex;
  align-items: center;
  justify-content: center;
  height: 16px;
  border-top: 1px solid #212121;
  background-color: #404040;
`;

const StBottomBar = styled.nav`
  display: flex;
  align-items: center;
  height: 36px;
  padding-left: 2px;
  border-top: 1px solid #212121;
  background-color: #ebebeb;
  color: #4d4d4d;
`;

const StCrumb = styled.a`
  display: flex;
  align-items: center;
  gap: 9px;
  padding: 0 8px 0 11px;
  color: inherit;
  text-decoration: none;
`;

const StPanel = styled.aside`
  display: flex;
  flex-direction: column;
  width: 301px;
  border-left: 1px solid #212121;
  overflow: hidden;

  & > * {
    flex-shrink: 0;
  }
`;

const StTabs = styled.div`
  display: grid;
  grid-template-columns: 74px repeat(3, 1fr);
`;

const StTab = styled.button`
  display: flex;
  align-items: center;
  justify-content: center;
  height: 44px;
  color: ${(props) => (props.$active ? "#fff" : "#a6a6a6")};
  background-color: ${(props) => (props.$active ? "#404040" : "#2b2b2b")};
  border-bottom: 1px solid ${(props) => (props.$active ? "#404040" : "#212121")};

  & + & {
    border-left: 1px solid #212121;
  }
`;

const StStylesTop = styled.div`
  padding: 7px 10px 10px;
  border-bottom: 1px solid #2b2b2b;
`;

const StStylesRow = styled.div`
  display: flex;
  align-items: center;
  gap: 8px;
  height: 20px;
  padding: 0 1px;
  color: #a6a6a6;
`;

const StStylesName = styled.span`
  flex: 1;
  color: #d9d9d9;
`;

const StCreateButton = styled.button`
  ${raised}
  display: flex;
  align-items: center;
  justify-content: center;
  gap: 6px;
  width: 100%;
  height: 30px;
  margin-top: 8px;
`;

const StSelectorSection = styled.div`
  display: flex;
  flex-direction: column;
  gap: 6px;
  padding: 11px 10px 32px;
  color: #ebebeb;
`;

const StSelectorField = styled.div`
  display: flex;
  gap: 3px;
  height: 40px;
  padding: 4px;
  border: 1px solid #212121;
  border-radius: 2px;
  background-color: #2b2b2b;
`;

const StSelectorChip = styled.button`
  display: flex;
  align-items: center;
  justify-content: center;
  width: 37px;
  border-radius: 2px;
  color: #fff;
  background-color: #0073e6;
`;

const StSectionHeader = styled.div`
  display: flex;
  align-items: center;
  gap: 10px;
  height: 36px;
  padding: 0 11px 0 10px;
  border-top: 1px solid #212121;
  border-bottom: 1px solid #212121;
  color: #bdbdbd;
  background-color: #2b2b2b;
`;

const StSectionTitle = styled.h3`
  flex: 1;
  margin: 0;
  font-size: 15px;
  font-weight: 600;
  color: #ebebeb;
`;

const StSectionBody = styled.div`
  display: flex;
  flex-direction: column;
  gap: 10px;
  padding: ${(props) => (props.$divided ? "8px 10px 11px" : "10px")};
  border-top: ${(props) => (props.$divided ? "2px solid #363636" : "0")};
`;

const StRow = styled.div`
  display: grid;
  grid-template-columns: 65px 1fr;
  align-items: center;
`;

const StTag = styled.span`
  justify-self: start;
  margin-left: -3px;
  padding: 0 3px;
  border-radius: 2px;
  color: #f79a5c;
  background-color: #5e4435;
`;

const StGroup = styled.div`
  display: flex;
  height: 30px;
  border: 1px solid #363636;
  border-radius: 2px;
`;

const StGroupButton = styled.button`
  flex: 1;
  display: flex;
  align-items: center;
  justify-content: center;
  color: ${(props) => (props.$muted ? "#808080" : "#ebebeb")};
  background-color: ${(props) =>
    props.$active ? "#2b2b2b" : props.$muted ? "#4d4d4d" : "#5e5e5e"};

  & + & {
    border-left: 1px solid #363636;
  }
`;

const StInlineMark = styled.span`
  width: 18px;
  height: 16px;
  border: 1px solid #999;
  border-width: 0 1px;
  font-size: 17px;
  font-weight: 500;
  line-height: 16px;
`;

const StBox = styled.div`
  position: relative;
  display: grid;
  grid-template: "top top top" 29px "left inner right" 1fr "bottom bottom bottom" 29px / 44px 1fr 44px;
  width: 100%;
  border: 1px solid #363636;
  border-radius: 2px;
  background-color: #4d4d4d;

  /* lighter left and right sides */
  &::before {
    content: "";
    position: absolute;
    inset: 0;
    background-color: #545454;
    clip-path: polygon(
      0 0,
      44px 29px,
      44px calc(100% - 29px),
      calc(100% - 44px) calc(100% - 29px),
      calc(100% - 44px) 29px,
      100% 0,
      100% 100%,
      calc(100% - 44px) calc(100% - 29px),
      44px calc(100% - 29px),
      0 100%
    );
  }
`;

const StBoxName = styled.span`
  position: absolute;
  top: 0;
  left: 6px;
  font-size: 10px;
  font-style: italic;
  font-weight: 700;
  line-height: 16px;
  color: #a6a6a6;
`;

const StBoxValue = styled.button`
  position: relative;
  grid-area: ${(props) => props.$area};
  justify-self: center;
  width: 30px;
  padding-bottom: 2px;
  line-height: 18px;
  color: #ebebeb;
`;

const StBoxInner = styled.div`
  position: relative;
  grid-area: inner;
  display: flex;
`;

const StBoxWell = styled.div`
  flex: 1;
  display: flex;
  padding: 4px;
  border: 1px solid #363636;
  border-radius: 2px;
  background-color: #404040;
`;

const StBoxCore = styled.div`
  flex: 1;
  height: 20px;
  border: 1px solid #363636;
  border-radius: 2px;
  background-color: #404040;
`;

const StSizeGrid = styled.div`
  display: grid;
  grid-template-columns: 55px 1fr 55px 1fr;
  gap: 10px;
  align-items: center;
  color: #ebebeb;
`;

const StInlineFields = styled.div`
  display: flex;
  align-items: center;
  gap: 10px;
  padding-right: 6px;
`;

const StFeedbackTab = styled.button`
  position: absolute;
  top: 432px;
  right: 0;
  width: 8px;
  height: 38px;
  border-radius: 4px 0 0 4px;
  background-color: #00c899;
`;
